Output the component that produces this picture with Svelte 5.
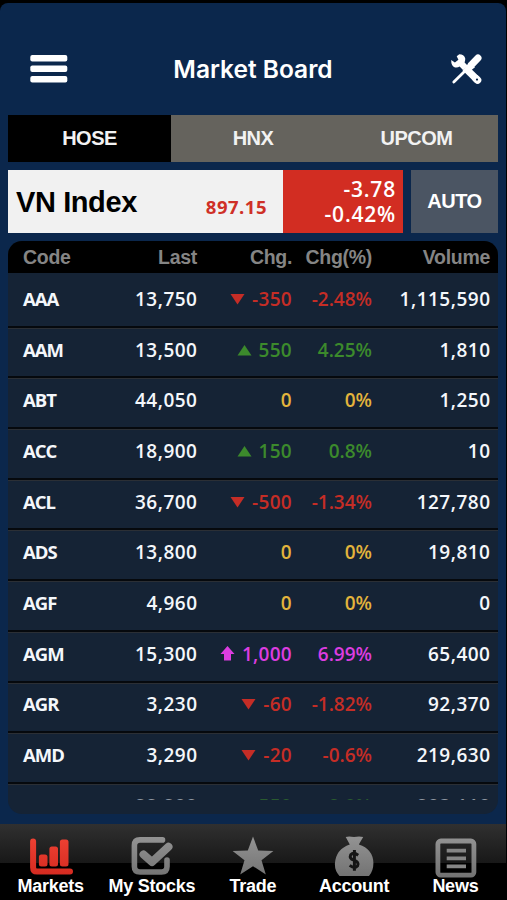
<script lang="ts">
    type Stock = { code: string; last: string; chg: string; pct: string; volume: string; trend: string };

    let exchange = $state("HOSE");
    let tab = $state("Markets");

    const exchanges = ["HOSE", "HNX", "UPCOM"];
    const tabs = ["Markets", "My Stocks", "Trade", "Account", "News"];

    const stocks: Stock[] = [
        { code: "AAA", last: "13,750", chg: "-350", pct: "-2.48%", volume: "1,115,590", trend: "down" },
        { code: "AAM", last: "13,500", chg: "550", pct: "4.25%", volume: "1,810", trend: "up" },
        { code: "ABT", last: "44,050", chg: "0", pct: "0%", volume: "1,250", trend: "flat" },
        { code: "ACC", last: "18,900", chg: "150", pct: "0.8%", volume: "10", trend: "up" },
        { code: "ACL", last: "36,700", chg: "-500", pct: "-1.34%", volume: "127,780", trend: "down" },
        { code: "ADS", last: "13,800", chg: "0", pct: "0%", volume: "19,810", trend: "flat" },
        { code: "AGF", last: "4,960", chg: "0", pct: "0%", volume: "0", trend: "flat" },
        { code: "AGM", last: "15,300", chg: "1,000", pct: "6.99%", volume: "65,400", trend: "ceiling" },
        { code: "AGR", last: "3,230", chg: "-60", pct: "-1.82%", volume: "92,370", trend: "down" },
        { code: "AMD", last: "3,290", chg: "-20", pct: "-0.6%", volume: "219,630", trend: "down" },
        { code: "ANV", last: "22,200", chg: "550", pct: "2.8%", volume: "203,110", trend: "up" }
    ];
</script>

<div class="screen">
    <div class="app">
        <header>
            <button class="icon-btn" aria-label="Menu">
                <svg width="38" height="30" viewBox="0 0 38 30" fill="#fff">
                    <rect x="0.3" y="0" width="37" height="6.6" rx="2" />
                    <rect x="0.3" y="10.4" width="37" height="6.6" rx="2" />
                    <rect x="0.3" y="21" width="37" height="6.6" rx="2" />
                </svg>
            </button>
            <h1>Market Board</h1>
            <button class="icon-btn" aria-label="Settings">
                <svg width="32" height="32" viewBox="0 0 32 32" fill="none" stroke="#fff" stroke-linecap="round">
                    <path d="M2.8 28L14 17" stroke-width="2.8" />
                    <path d="M21 10.2L27 4" stroke-width="7" />
                    <path d="M17.5 8.5L13 16.6L16 19.4L24 13.2Z" fill="#fff" stroke="none" />
                    <path d="M0.2 6L3.9 8.4L7.4 5.8L5.7 2.2L8.3 0.2Q13 0.4 14.2 4.2Q14.5 6.5 13.6 8.4L17 12L12 16L8.6 12.6Q6.5 13.9 4 13.4Q0 12 0.2 6Z" fill="#fff" stroke="none" />
                    <path d="M14 13.8L26.4 26" stroke-width="7.2" stroke-linecap="butt" />
                    <path d="M25 24.6L26.6 26.2" stroke-width="7.4" />
                    <circle cx="26" cy="25.6" r="1.1" fill="#0b274c" stroke="none" />
                </svg>
            </button>
        </header>

        <nav class="exchanges">
            {#each exchanges as name}
                <button class:active={exchange === name} onclick={() => (exchange = name)}>{name}</button>
            {/each}
        </nav>

        <div class="index-row">
            <div class="index">
                <span class="index-name">VN Index</span>
                <span class="index-value">897.15</span>
            </div>
            <div class="index-change">
                <div>-3.78</div>
                <div>-0.42%</div>
            </div>
            <button class="auto">AUTO</button>
        </div>

        <div class="board">
            <div class="row head">
                <span>Code</span>
                <span>Last</span>
                <span>Chg.</span>
                <span>Chg(%)</span>
                <span>Volume</span>
            </div>
            <div class="rows">
                {#each stocks as s}
                    <div class="row stock {s.trend}">
                        <span class="code">{s.code}</span>
                        <span class="num">{s.last}</span>
                        <span class="change">
                            {#if s.trend === "down"}
                                <svg width="15" height="12" viewBox="0 0 15 12"><path d="M0.5 1H14.5L7.5 11.5Z" /></svg>
                            {:else if s.trend === "up"}
                                <svg width="15" height="12" viewBox="0 0 15 12"><path d="M0.5 11.5H14.5L7.5 1Z" /></svg>
                            {:else if s.trend === "ceiling"}
                                <svg width="15" height="15" viewBox="0 0 15 15"><path d="M7.5 0L14.5 8H11V14.5H4V8H0.5Z" /></svg>
                            {/if}
                            <span>{s.chg}</span>
                        </span>
                        <span class="pct">{s.pct}</span>
                        <span class="num">{s.volume}</span>
                    </div>
                {/each}
            </div>
        </div>
    </div>

    <footer>
        {#each tabs as name, i}
            <button class:active={tab === name} onclick={() => (tab = name)}>
                <svg width="46" height="42" viewBox="0 0 46 42">
                    {#if i === 0}
                        <path d="M4.1 5.5V31.5Q4.1 35.6 8 35.6H41" fill="none" stroke="url(#red)" stroke-width="6" stroke-linecap="round" />
                        <rect x="9.9" y="18.5" width="8.6" height="12" rx="2.5" fill="url(#red)" />
                        <rect x="20.4" y="10.5" width="8.6" height="20" rx="2.5" fill="url(#red)" />
                        <rect x="30.9" y="3.5" width="8.6" height="27" rx="2.5" fill="url(#red)" />
                    {:else if i === 1}
                        <path d="M32.5 3.9H10Q4.4 3.9 4.4 9.5V30.5Q4.4 36 10 36H31.5Q37 36 37 30.5V24" fill="none" stroke="url(#grey)" stroke-width="5.6" stroke-linecap="round" />
                        <path d="M13.5 18.5L22 26L38.5 10.8" fill="none" stroke="url(#grey)" stroke-width="8" stroke-linecap="round" stroke-linejoin="round" />
                    {:else if i === 2}
                        <path d="M22 0.5L27.2 14.5L42.4 15.1L30.5 24.3L34.8 38.5L22 30.2L9.2 38.5L13.5 24.3L1.6 15.1L16.8 14.5Z" fill="url(#grey)" />
                    {:else if i === 3}
                        <path d="M13.7 0.9Q17 -0.1 22 1Q27 -0.1 31.2 0.9L26.8 8.5Q41 13 41.4 27Q41.5 35 37 40H7.5Q2.6 35 2.9 27.5Q4 13 17.8 8.5Z" fill="url(#grey)" />
                        <path d="M26.2 19.2Q21.5 15.8 18.7 18.8Q17 22.4 21.8 24.2Q27.6 26.2 25.5 30Q22.5 33 17.7 29.4M22.4 14V34.8" fill="none" stroke="#151515" stroke-width="3" />
                    {:else}
                        <rect x="4.9" y="5" width="36" height="34.2" rx="3" fill="none" stroke="url(#grey)" stroke-width="4.8" />
                        <path d="M13.7 14.6H33M13.7 22.4H33M13.7 30.3H33" fill="none" stroke="#858585" stroke-width="3.8" />
                    {/if}
                </svg>
                <span>{name}</span>
            </button>
        {/each}
    </footer>
</div>

<!-- shared gradients for the tab icons -->
<svg class="defs" width="0" height="0">
    <defs>
        <linearGradient id="red" gradientUnits="userSpaceOnUse" x1="0" y1="0" x2="0" y2="40">
            <stop offset="0" stop-color="#ef4234" />
            <stop offset="1" stop-color="#d52a20" />
        </linearGradient>
        <linearGradient id="grey" gradientUnits="userSpaceOnUse" x1="0" y1="0" x2="0" y2="40">
            <stop offset="0" stop-color="#949494" />
            <stop offset="1" stop-color="#737373" />
        </linearGradient>
    </defs>
</svg>

<style>
    :global(body) {
        background: #000;
    }
    .screen {
        box-sizing: border-box;
        width: 507px;
        height: 900px;
        padding: 3px 1px 0 0;
        display: flex;
        flex-direction: column;
        overflow: hidden;
        background: #000;
        font-family: "Liberation Sans", Arial, sans-serif;
    }
    button {
        margin: 0;
        padding: 0;
        border: none;
        background: none;
        color: #fff;
        font: inherit;
        font-weight: bold;
    }
    svg {
        display: block;
        flex: none;
    }
    .defs {
        height: 0;
    }
    .app {
        box-sizing: border-box;
        height: 821px;
        padding: 0 8px;
        border-radius: 8px 8px 0 0;
        background: #0b274c;
    }
    header {
        height: 112px;
        padding: 21px 15px 0 22px;
        box-sizing: border-box;
        display: grid;
        grid-template-columns: 38px 1fr 32px;
        align-items: center;
    }
    h1 {
        margin: 0;
        padding: 0 13px 2px 0;
        text-align: center;
        font: 600 24.5px/30px Inter, sans-serif;
        color: #fff;
    }
    .exchanges {
        display: grid;
        grid-template-columns: 163px 164px 1fr;
        height: 47px;
        background: #65635d;
    }
    .exchanges button {
        font-size: 20px;
        letter-spacing: -0.5px;
        color: #f2f2f2;
    }
    .exchanges .active {
        background: #000;
    }
    .index-row {
        display: flex;
        height: 63px;
        margin: 8px 0;
    }
    .index {
        flex: 1;
        display: flex;
        justify-content: space-between;
        align-items: center;
        padding: 0 16px 0 8px;
        background: #f1f1f1;
    }
    .index-name {
        padding-top: 2px;
        font-size: 29px;
        font-weight: bold;
        letter-spacing: -0.4px;
        color: #000;
    }
    .index-value {
        padding-top: 9px;
        font: 700 18.5px "Open Sans", sans-serif;
        letter-spacing: 0.5px;
        color: #cf3027;
    }
    .index-change {
        box-sizing: border-box;
        width: 120px;
        padding: 7px 7px 0 0;
        text-align: right;
        background: #d22d22;
        color: #fff;
        font: 600 21px/25px "Open Sans", sans-serif;
        letter-spacing: 0.8px;
    }
    .auto {
        width: 87px;
        margin-left: 8px;
        background: #4b5563;
        font-size: 20px;
        letter-spacing: -0.5px;
    }
    .board {
        height: 573px;
        border-radius: 14px;
        overflow: hidden;
        background: #152335;
    }
    .row {
        display: grid;
        grid-template-columns: 90px 84px 95px 80px 118px;
        padding: 0 8px 0 15px;
        align-items: center;
        text-align: right;
    }
    .row > :first-child {
        text-align: left;
    }
    .head {
        height: 32px;
        background: #000;
        color: #858585;
        font-size: 19.5px;
        font-weight: bold;
        letter-spacing: -0.3px;
    }
    .rows {
        height: 527px;
        overflow: hidden;
    }
    .stock {
        box-sizing: border-box;
        height: 50.7px;
        padding-bottom: 6px;
        border-top: 1px solid #2b2f35;
        border-bottom: 2px solid #06090d;
        color: #f4f7fb;
        font: 600 19px/26px "Open Sans", sans-serif;
    }
    .stock:first-child {
        height: 54.7px;
        padding-bottom: 1px;
        border-top: none;
    }
    /* only the tips of the next row show above the fold */
    .stock:last-child > span {
        padding-top: 1px;
        opacity: 0.55;
    }
    .code {
        font-size: 18.5px;
        font-weight: 700;
        letter-spacing: -1px;
    }
    .num {
        margin-right: -0.5px;
        letter-spacing: 0.5px;
    }
    .change {
        display: flex;
        align-items: center;
        justify-content: flex-end;
        gap: 7px;
        letter-spacing: 0.3px;
        fill: currentColor;
    }
    .down .change,
    .down .pct {
        color: #c52d26;
    }
    .up .change,
    .up .pct {
        color: #3c8a2c;
    }
    .flat .change,
    .flat .pct {
        color: #e3b43c;
    }
    .ceiling .change,
    .ceiling .pct {
        color: #dc3de0;
    }
    footer {
        height: 76px;
        display: grid;
        grid-template-columns: repeat(5, 1fr);
        background: linear-gradient(#303030 0, #181818 39px, #000 39px);
        border-radius: 0 0 8px 8px;
    }
    footer button {
        display: flex;
        flex-direction: column;
        align-items: center;
        padding-top: 12px;
    }
    footer svg {
        margin-left: 2px;
    }
    footer span {
        margin-top: -2px;
        font-size: 18px;
        line-height: 20px;
        letter-spacing: -0.25px;
    }
</style>
